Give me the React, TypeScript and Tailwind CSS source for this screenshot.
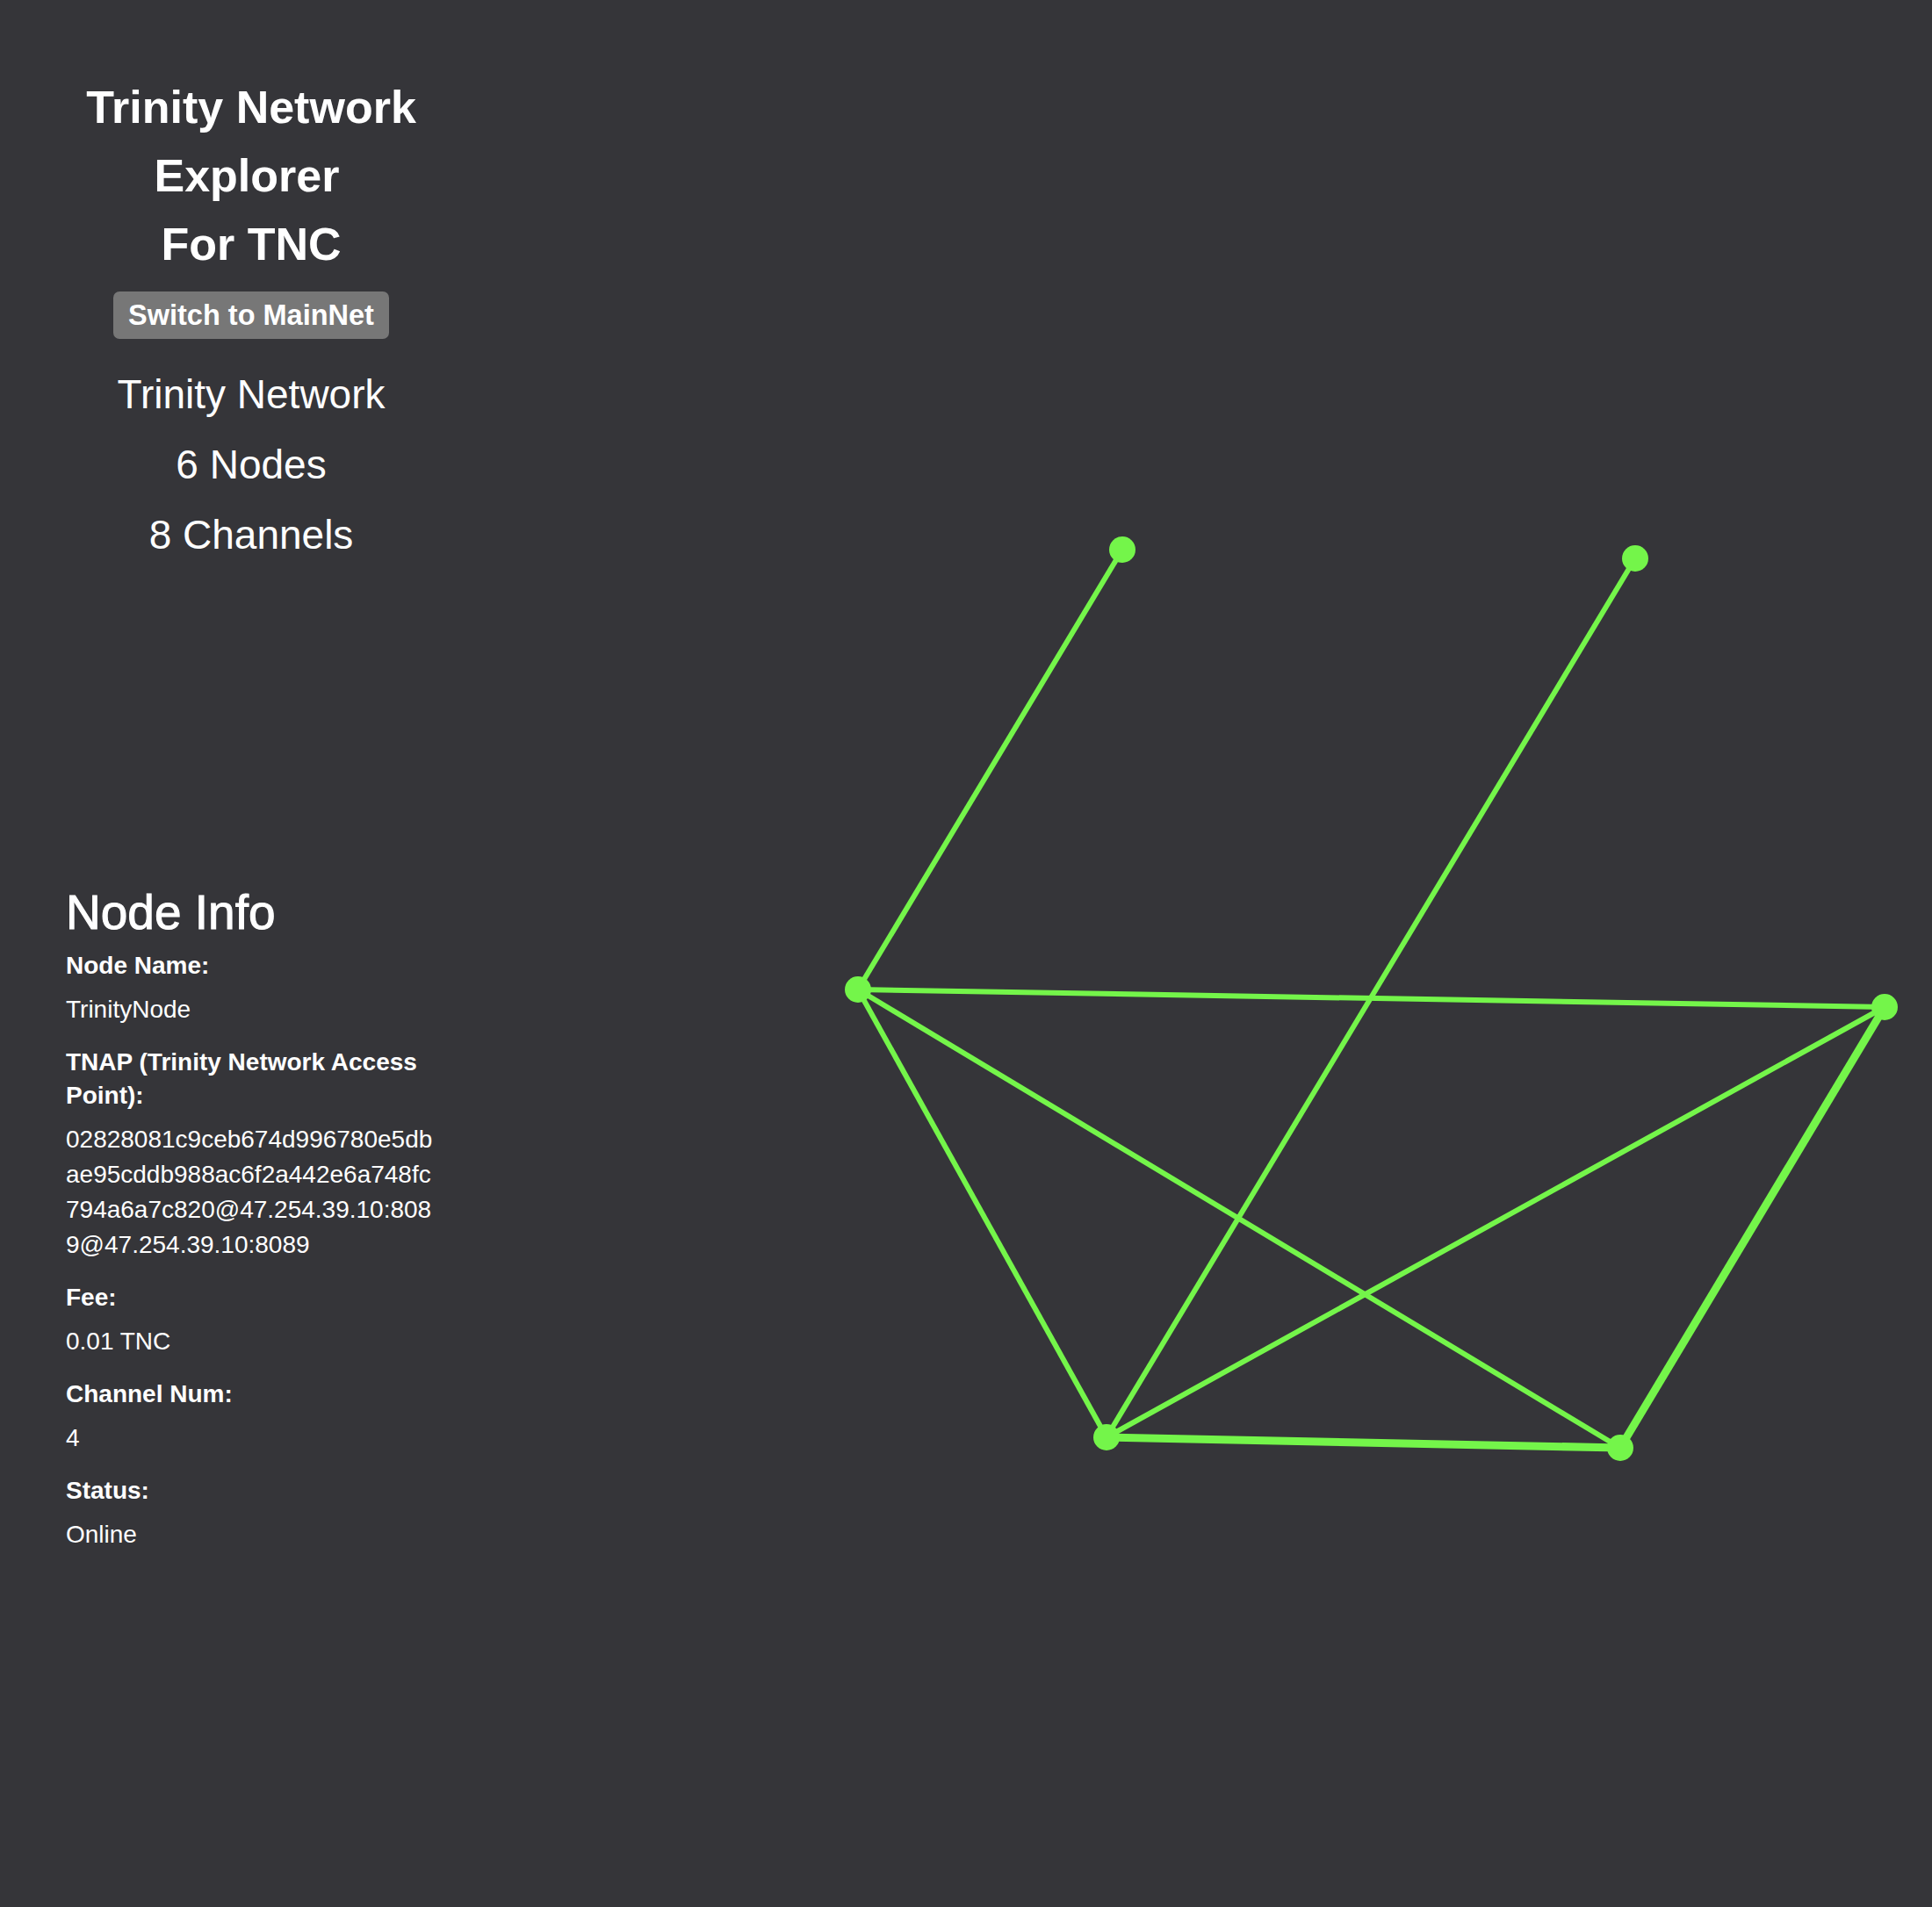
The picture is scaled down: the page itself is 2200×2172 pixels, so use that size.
const nodes = [
  { id: "a", x: 1278, y: 626 },
  { id: "b", x: 1862, y: 636 },
  { id: "c", x: 977, y: 1127 },
  { id: "d", x: 2146, y: 1147 },
  { id: "e", x: 1260, y: 1637 },
  { id: "f", x: 1845, y: 1649 },
];

const channels: [string, string, number][] = [
  ["c", "a", 6],
  ["c", "d", 6],
  ["c", "e", 6],
  ["c", "f", 6],
  ["b", "e", 6],
  ["d", "e", 6],
  ["d", "f", 9],
  ["e", "f", 9],
];

const info = [
  { label: "Node Name:", value: "TrinityNode" },
  { label: "TNAP (Trinity Network Access Point):", value: "02828081c9ceb674d996780e5dbae95cddb988ac6f2a442e6a748fc794a6a7c820@47.254.39.10:8089@47.254.39.10:8089" },
  { label: "Fee:", value: "0.01 TNC" },
  { label: "Channel Num:", value: "4" },
  { label: "Status:", value: "Online" },
];

function NetworkGraph() {
  const byId = Object.fromEntries(nodes.map((n) => [n.id, n]));
  return (
    <svg className="absolute inset-0" width="1628" height="2172" viewBox="572 0 1628 2172">
      {channels.map(([from, to, w], i) => (
        <line
          key={i}
          x1={byId[from].x}
          y1={byId[from].y}
          x2={byId[to].x}
          y2={byId[to].y}
          stroke="#74f54a"
          strokeWidth={w}
        />
      ))}
      {nodes.map((n) => (
        <circle key={n.id} cx={n.x} cy={n.y} r={15} fill="#74f54a" />
      ))}
    </svg>
  );
}

export default function App() {
  return (
    <div className="flex min-h-[2172px] w-full bg-[#353539] font-['Liberation_Sans',Arial,sans-serif] text-white">
      <aside className="w-[572px] shrink-0 px-[75px]">
        <div className="pt-[83px] text-center">
          <h1 className="text-[52px] font-bold leading-[78px]">
            <div>Trinity Network</div>
            <div className="pr-[10px]">Explorer</div>
            <div>For TNC</div>
          </h1>
          <button className="mt-[15px] rounded-[7px] bg-[#777777] px-[17px] py-[8px] text-[32.5px] font-bold leading-[38px] text-white">
            Switch to MainNet
          </button>
          <div className="mt-[23px] text-[46px] leading-[80px]">
            <div>Trinity Network</div>
            <div>6 Nodes</div>
            <div>8 Channels</div>
          </div>
        </div>

        <section className="mt-[360px]">
          <h2 className="mb-[12px] text-[55px] leading-[60px] [-webkit-text-stroke:1px_white]">Node Info</h2>
          {info.map((row) => (
            <div key={row.label}>
              <div className="mb-[11px] text-[28px] font-bold leading-[38px]">{row.label}</div>
              <div className="mb-[21px] break-all text-[28px] leading-[40px]">{row.value}</div>
            </div>
          ))}
        </section>
      </aside>

      <main className="relative flex-1">
        <NetworkGraph />
      </main>
    </div>
  );
}
